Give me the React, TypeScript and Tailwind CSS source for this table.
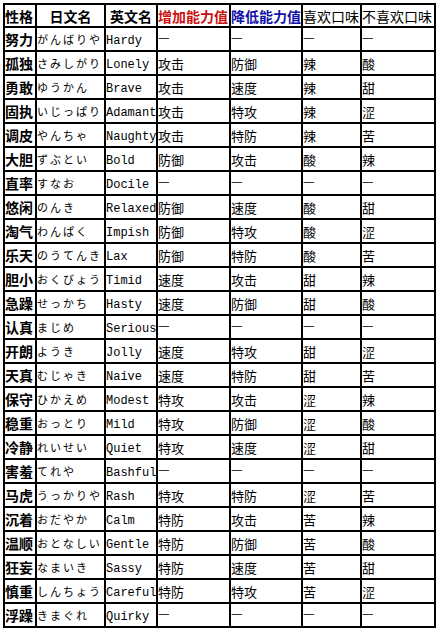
import React from 'react'

const COLS = 'grid-cols-[30px_67px_50px_71px_70px_57px_72px]'

const NATURES: [string, string, string, string, string, string, string][] = [
  ['努力', 'がんばりや', 'Hardy', '—', '—', '—', '—'],
  ['孤独', 'さみしがり', 'Lonely', '攻击', '防御', '辣', '酸'],
  ['勇敢', 'ゆうかん', 'Brave', '攻击', '速度', '辣', '甜'],
  ['固执', 'いじっぱり', 'Adamant', '攻击', '特攻', '辣', '涩'],
  ['调皮', 'やんちゃ', 'Naughty', '攻击', '特防', '辣', '苦'],
  ['大胆', 'ずぶとい', 'Bold', '防御', '攻击', '酸', '辣'],
  ['直率', 'すなお', 'Docile', '—', '—', '—', '—'],
  ['悠闲', 'のんき', 'Relaxed', '防御', '速度', '酸', '甜'],
  ['淘气', 'わんぱく', 'Impish', '防御', '特攻', '酸', '涩'],
  ['乐天', 'のうてんき', 'Lax', '防御', '特防', '酸', '苦'],
  ['胆小', 'おくびょう', 'Timid', '速度', '攻击', '甜', '辣'],
  ['急躁', 'せっかち', 'Hasty', '速度', '防御', '甜', '酸'],
  ['认真', 'まじめ', 'Serious', '—', '—', '—', '—'],
  ['开朗', 'ようき', 'Jolly', '速度', '特攻', '甜', '涩'],
  ['天真', 'むじゃき', 'Naive', '速度', '特防', '甜', '苦'],
  ['保守', 'ひかえめ', 'Modest', '特攻', '攻击', '涩', '辣'],
  ['稳重', 'おっとり', 'Mild', '特攻', '防御', '涩', '酸'],
  ['冷静', 'れいせい', 'Quiet', '特攻', '速度', '涩', '甜'],
  ['害羞', 'てれや', 'Bashful', '—', '—', '—', '—'],
  ['马虎', 'うっかりや', 'Rash', '特攻', '特防', '涩', '苦'],
  ['沉着', 'おだやか', 'Calm', '特防', '攻击', '苦', '辣'],
  ['温顺', 'おとなしい', 'Gentle', '特防', '防御', '苦', '酸'],
  ['狂妄', 'なまいき', 'Sassy', '特防', '速度', '苦', '甜'],
  ['慎重', 'しんちょう', 'Careful', '特防', '特攻', '苦', '涩'],
  ['浮躁', 'きまぐれ', 'Quirky', '—', '—', '—', '—'],
]

const cjk = "font-['Noto_Sans_CJK_SC','Noto_Sans_CJK_JP',sans-serif]"

function Stat({ value }: { value: string }) {
  const isDash = value === '—'
  return (
    <div className="flex h-[22px] items-center bg-white text-[13px] leading-none">
      <span className={isDash ? '-translate-y-[3px]' : ''}>{value}</span>
    </div>
  )
}

export default function App() {
  return (
    <div className="min-h-screen bg-white pl-[3px] pt-[3px] text-black">
      <div className={`grid ${COLS} w-fit gap-[2px] bg-black p-[2px] ${cjk}`}>
        {/* header */}
        <div className="flex h-[21px] items-center bg-white text-[14px] font-bold leading-none">性格</div>
        <div className="flex h-[21px] items-center justify-center bg-white text-[14px] font-bold leading-none">日文名</div>
        <div className="flex h-[21px] items-center justify-center bg-white text-[14px] font-bold leading-none">英文名</div>
        <div className="flex h-[21px] items-center bg-white text-[14px] font-bold leading-none text-[#cc1111]">增加能力值</div>
        <div className="flex h-[21px] items-center bg-white text-[14px] font-bold leading-none text-[#1111aa]">降低能力值</div>
        <div className="flex h-[21px] items-center bg-white text-[14px] leading-none">喜欢口味</div>
        <div className="flex h-[21px] items-center bg-white text-[14px] leading-none">不喜欢口味</div>

        {NATURES.map((row) => (
          <React.Fragment key={row[2]}>
            <div className="flex h-[22px] items-center bg-white text-[14px] font-bold leading-none">{row[0]}</div>
            <div className="flex h-[22px] items-center whitespace-nowrap bg-white text-[11px] leading-none tracking-[2px]">{row[1]}</div>
            <div className="flex h-[22px] items-center bg-white pt-[3px] font-['Liberation_Mono',monospace] text-[12px] leading-none">{row[2]}</div>
            <Stat value={row[3]} />
            <Stat value={row[4]} />
            <Stat value={row[5]} />
            <Stat value={row[6]} />
          </React.Fragment>
        ))}
      </div>
    </div>
  )
}
